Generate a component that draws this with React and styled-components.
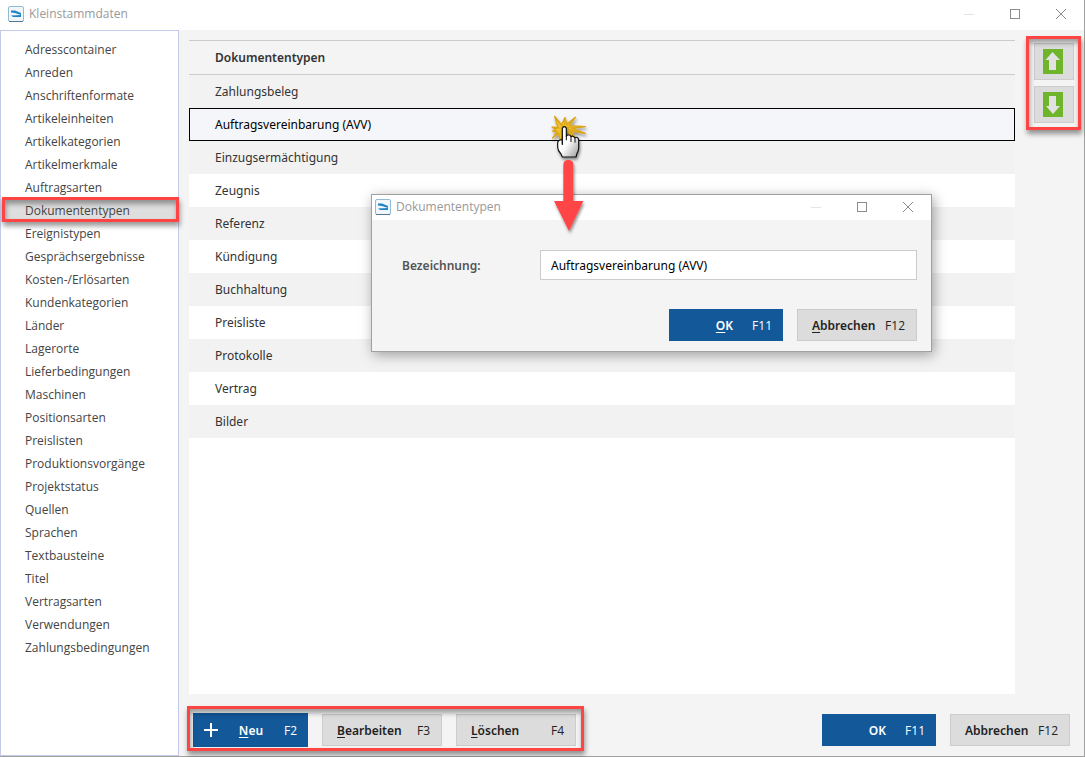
import React, { useState } from 'react';
import styled, { createGlobalStyle, css } from 'styled-components';

const GlobalStyle = createGlobalStyle`
  * {
    box-sizing: border-box;
  }
  body {
    margin: 0;
    font-family: 'Noto Sans', 'Open Sans', sans-serif;
    font-size: 12px;
    color: #333;
  }
`;

const Window = styled.div`
  position: relative;
  min-height: 100vh;
  display: flex;
  flex-direction: column;
  background: #f4f4f4;
  border-right: 1px solid #a0a0a0;
  border-bottom: 1px solid #a0a0a0;
`;

const TitleBar = styled.header`
  display: flex;
  align-items: center;
  height: ${props => (props.$small ? 25 : 30)}px;
  padding: ${props => (props.$small ? '0 0 1px 3px' : '0 0 2px 8px')};
  background: #fff;
`;

const Title = styled.h1`
  flex: 1;
  margin: 0 0 0 5px;
  font-family: 'Open Sans', sans-serif;
  font-size: 12px;
  font-weight: 400;
  line-height: 16px;
  color: #999;
`;

const WindowButton = styled.button`
  width: 46px;
  height: 100%;
  padding: 0;
  border: 0;
  background: none;
  color: ${props => (props.disabled ? '#e4e4e4' : '#8c8c8c')};
  display: flex;
  align-items: center;
  justify-content: center;
`;

const Body = styled.div`
  flex: 1;
  display: flex;
`;

const Sidebar = styled.nav`
  width: 179px;
  flex: none;
  padding-top: 7px;
  background: #fff;
  border: 1px solid #c5cae9;
`;

const SidebarList = styled.ul`
  margin: 0;
  padding: 0;
  list-style: none;
`;

const marker = css`
  position: relative;
  &::after {
    content: '';
    position: absolute;
    inset: ${props => props.$inset || '0'};
    border: 3px solid #ff4444;
    box-shadow: 1px 4px 5px rgba(0, 0, 0, 0.4), inset 1px 4px 5px rgba(0, 0, 0, 0.35);
    pointer-events: none;
  }
`;

const SidebarItem = styled.li`
  ${props => props.$active && marker}
`;

const SidebarLink = styled.a`
  display: block;
  padding-left: 24px;
  font-family: 'Open Sans', sans-serif;
  line-height: 23px;
  color: #444;
  text-decoration: none;
  background: ${props => (props.$active ? '#dedede' : 'transparent')};
`;

const Main = styled.main`
  flex: 1;
  display: flex;
  flex-direction: column;
  padding: 10px 14px 9px 10px;
`;

const Content = styled.div`
  flex: 1;
  display: flex;
  gap: 12px;
`;

const ListArea = styled.div`
  flex: 1;
  background: #fff;
`;

const Table = styled.table`
  width: 100%;
  border-collapse: separate;
  border-spacing: 0;
`;

const HeadCell = styled.th`
  height: 35px;
  padding: 0 26px;
  text-align: left;
  font-weight: 600;
  background: #f4f4f4;
  border-top: 1px solid #ccc;
  border-bottom: 1px solid #ccc;
`;

const Row = styled.tr`
  height: 33px;
  background: #fff;
  &:nth-child(odd) {
    background: #f2f2f2;
  }
  ${props =>
    props.$selected &&
    css`
      && {
        background: #f4f6f9;
        color: #000;
        outline: 1px solid #000;
        outline-offset: -1px;
      }
    `}
`;

const Cell = styled.td`
  padding: 0 26px;
  line-height: 18px;
`;

const Sorting = styled.div`
  ${marker}
  align-self: flex-start;
  display: flex;
  flex-direction: column;
  gap: 6px;
  padding: 3px 0 6px 7px;
  margin-right: -4px;
`;

const SortButton = styled.button`
  width: 40px;
  height: 37px;
  padding: 0 2px 0 0;
  display: flex;
  align-items: center;
  justify-content: center;
  background: #dcdcdc;
  border: 1px solid #ccc;
`;

const Footer = styled.footer`
  display: flex;
  align-items: center;
  justify-content: space-between;
  margin-top: 19px;
`;

const ButtonGroup = styled.div`
  display: flex;
  align-items: center;
  justify-content: flex-end;
  gap: 14px;
`;

const MarkedGroup = styled(ButtonGroup)`
  ${marker}
  padding-left: 4px;
`;

const Button = styled.button`
  display: flex;
  align-items: center;
  justify-content: space-between;
  width: ${props => (props.$primary ? 114 : 120)}px;
  height: 32px;
  padding: 0 11px 0 14px;
  font-family: inherit;
  font-size: 12px;
  font-weight: 600;
  color: ${props => (props.$primary ? '#fff' : '#222')};
  background: ${props => (props.$primary ? '#135899' : '#dcdcdc')};
  border: ${props => (props.$primary ? '0' : '1px solid #ccc')};

  ${props =>
    props.$confirm &&
    css`
      justify-content: flex-end;
      gap: 19px;
    `}
`;

const NewButton = styled(Button)`
  width: 115px;
  height: 34px;
  padding-left: 11px;
`;

const Access = styled.span`
  text-decoration: underline;
  text-underline-offset: 2px;
`;

const Key = styled.span`
  font-family: 'Open Sans', sans-serif;
  font-weight: 400;
`;

const Dialog = styled.section`
  position: absolute;
  left: 371px;
  top: 194px;
  width: 561px;
  background: #f4f4f4;
  border: 1px solid #a0a0a0;
  box-shadow: 2px 3px 12px rgba(0, 0, 0, 0.35);
`;

const DialogForm = styled.form`
  padding: 30px 14px 10px 30px;
`;

const Field = styled.div`
  display: flex;
  align-items: center;
  margin-bottom: 29px;
`;

const Label = styled.label`
  width: 138px;
  font-weight: 600;
  color: #555;
`;

const Input = styled.input`
  flex: 1;
  min-width: 0;
  height: 30px;
  padding: 0 10px;
  font-family: inherit;
  font-size: 12px;
  color: #000;
  background: #fff;
  border: 1px solid #ccc;
  border-radius: 0;
`;

const Pointer = styled.svg`
  position: absolute;
  left: 530px;
  top: 100px;
  width: 90px;
  height: 140px;
  pointer-events: none;
`;

const CATEGORIES = [
  'Adresscontainer',
  'Anreden',
  'Anschriftenformate',
  'Artikeleinheiten',
  'Artikelkategorien',
  'Artikelmerkmale',
  'Auftragsarten',
  'Dokumententypen',
  'Ereignistypen',
  'Gesprächsergebnisse',
  'Kosten-/Erlösarten',
  'Kundenkategorien',
  'Länder',
  'Lagerorte',
  'Lieferbedingungen',
  'Maschinen',
  'Positionsarten',
  'Preislisten',
  'Produktionsvorgänge',
  'Projektstatus',
  'Quellen',
  'Sprachen',
  'Textbausteine',
  'Titel',
  'Vertragsarten',
  'Verwendungen',
  'Zahlungsbedingungen',
];

const TYPES = [
  'Zahlungsbeleg',
  'Auftragsvereinbarung (AVV)',
  'Einzugsermächtigung',
  'Zeugnis',
  'Referenz',
  'Kündigung',
  'Buchhaltung',
  'Preisliste',
  'Protokolle',
  'Vertrag',
  'Bilder',
];

const AppIcon = () => (
  <svg width="16" height="16" viewBox="0 0 16 16" aria-hidden="true">
    <rect x="0.5" y="0.5" width="15" height="15" rx="1.5" fill="#f1f6fa" stroke="#8fbbd8" />
    <path d="M1 15.5h14" stroke="#54788f" />
    <path d="M3 4.5h4l6 2.500v2L7 7 3 6.500z" fill="#1c84c6" />
    <path d="M3 9.500l10-.5v2H5z" fill="#1c84c6" />
  </svg>
);

const WindowControls = () => (
  <>
    <WindowButton type="button" aria-label="Minimieren" disabled>
      <svg width="10" height="10">
        <path d="M0 5.5h10" stroke="currentColor" />
      </svg>
    </WindowButton>
    <WindowButton type="button" aria-label="Maximieren">
      <svg width="10" height="10">
        <rect x="0.5" y="0.5" width="9" height="9" fill="none" stroke="currentColor" />
      </svg>
    </WindowButton>
    <WindowButton type="button" aria-label="Schließen">
      <svg width="10" height="10">
        <path d="M0 0l10 10M10 0L0 10" stroke="currentColor" />
      </svg>
    </WindowButton>
  </>
);

const ArrowIcon = ({ down }) => (
  <svg width="20" height="25" viewBox="0 0 20 25">
    <rect width="20" height="25" fill="#6fb52c" />
    <path
      d={down ? 'M6 4h7v10h4l-7 8-7-8h3z' : 'M9.5 3l7.5 8h-4v10H6V11H2.500z'}
      fill="#e2e2e2"
    />
  </svg>
);

const ClickPointer = () => (
  <Pointer viewBox="0 0 270 420" aria-hidden="true">
    <defs>
      <filter id="shadow" x="-30%" y="-20%" width="170%" height="150%">
        <feDropShadow dx="3" dy="7" stdDeviation="5" floodOpacity="0.45" />
      </filter>
      <linearGradient id="palm" x1="0" y1="0" x2="1" y2="1">
        <stop offset="0.5" stopColor="#fff" />
        <stop offset="1" stopColor="#999" />
      </linearGradient>
    </defs>
    <path
      d="M74 49l20 26 11-22 5 20 26-21-18 25 48 3-40 5 40 15-46-7 18 22-30-20-18 27-4-23-18 15 14-19-14-2 10-4-12-8 18 2z"
      fill="#f3c22b"
      stroke="#dca414"
      strokeWidth="4"
      strokeLinejoin="round"
      filter="url(#shadow)"
    />
    <path d="M74 49l28 34 3-30M136 52l-32 31 60-3M164 100l-60-16M68 86l34-3" fill="none" stroke="#d8a01a" strokeWidth="2" />
    <g filter="url(#shadow)">
      <path
        d="M97 132V86q1-6 6-6t6 6v23q2-5 7-4 6 0 7 5 7-4 11 3 9-4 12 5v27q0 7-5 15l-3 11H97l-4-9q-10-10-10-20v-13q0-9 14-10z"
        fill="url(#palm)"
        stroke="#111"
        strokeWidth="3.500"
        strokeLinejoin="round"
      />
      <path d="M97 121v14M109 108v13M123 109v17M135 113v15" stroke="#111" strokeWidth="3" />
    </g>
    <path d="M100 195q0-15 15-15t15 15v108h30l-43 90-45-90h28z" fill="#ff4444" filter="url(#shadow)" />
  </Pointer>
);

const App = () => {
  const [name, setName] = useState('Auftragsvereinbarung (AVV)');

  return (
    <Window>
      <GlobalStyle />
      <TitleBar>
        <AppIcon />
        <Title>Kleinstammdaten</Title>
        <WindowControls />
      </TitleBar>
      <Body>
        <Sidebar>
          <SidebarList>
            {CATEGORIES.map(item => (
              <SidebarItem key={item} $active={item === 'Dokumententypen'} $inset="-2px -1px 0 1px">
                <SidebarLink href="#" $active={item === 'Dokumententypen'}>
                  {item}
                </SidebarLink>
              </SidebarItem>
            ))}
          </SidebarList>
        </Sidebar>
        <Main>
          <Content>
            <ListArea>
              <Table>
                <thead>
                  <tr>
                    <HeadCell>Dokumententypen</HeadCell>
                  </tr>
                </thead>
                <tbody>
                  {TYPES.map((type, index) => (
                    <Row key={type} $selected={index === 1}>
                      <Cell>{type}</Cell>
                    </Row>
                  ))}
                </tbody>
              </Table>
            </ListArea>
            <Sorting $inset="-4px -7px -1px -1px">
              <SortButton type="button" aria-label="Nach oben">
                <ArrowIcon />
              </SortButton>
              <SortButton type="button" aria-label="Nach unten">
                <ArrowIcon down />
              </SortButton>
            </Sorting>
          </Content>
          <Footer>
            <MarkedGroup $inset="-7px -8px -4px -2px">
              <NewButton type="button" $primary>
                <svg width="14" height="14">
                  <path d="M7 0v14M0 7h14" stroke="#fff" strokeWidth="2" />
                </svg>
                <span>
                  <Access>N</Access>eu
                </span>
                <Key>F2</Key>
              </NewButton>
              <Button type="button">
                <span>
                  <Access>B</Access>earbeiten
                </span>
                <Key>F3</Key>
              </Button>
              <Button type="button">
                <span>
                  <Access>L</Access>öschen
                </span>
                <Key>F4</Key>
              </Button>
            </MarkedGroup>
            <ButtonGroup>
              <Button type="button" $primary $confirm>
                OK
                <Key>F11</Key>
              </Button>
              <Button type="button">
                Abbrechen
                <Key>F12</Key>
              </Button>
            </ButtonGroup>
          </Footer>
        </Main>
      </Body>
      <Dialog role="dialog" aria-labelledby="dialog-title">
        <TitleBar $small>
          <AppIcon />
          <Title as="h2" id="dialog-title">
            Dokumententypen
          </Title>
          <WindowControls />
        </TitleBar>
        <DialogForm onSubmit={e => e.preventDefault()}>
          <Field>
            <Label htmlFor="name">Bezeichnung:</Label>
            <Input id="name" value={name} onChange={e => setName(e.target.value)} />
          </Field>
          <ButtonGroup>
            <Button type="submit" $primary $confirm>
              <span>
                <Access>O</Access>K
              </span>
              <Key>F11</Key>
            </Button>
            <Button type="button">
              <span>
                <Access>A</Access>bbrechen
              </span>
              <Key>F12</Key>
            </Button>
          </ButtonGroup>
        </DialogForm>
      </Dialog>
      <ClickPointer />
    </Window>
  );
};

export default App;
